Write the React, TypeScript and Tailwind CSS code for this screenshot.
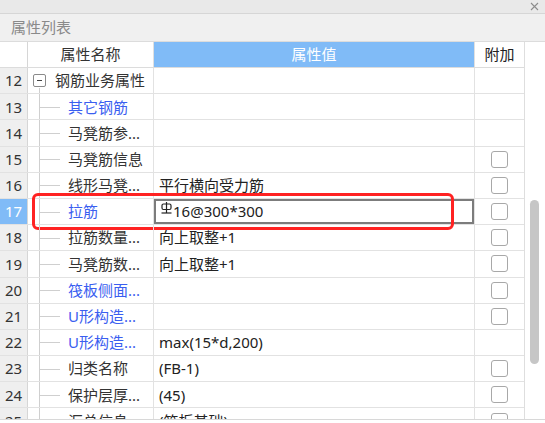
import React from 'react';

type Row = {
  n: number;
  name: string;
  val?: string;
  blue?: boolean;
  root?: boolean;
  cb?: boolean;
  sel?: boolean;
};

const rows: Row[] = [
  { n: 12, name: '钢筋业务属性', root: true },
  { n: 13, name: '其它钢筋', blue: true },
  { n: 14, name: '马凳筋参...' },
  { n: 15, name: '马凳筋信息', cb: true },
  { n: 16, name: '线形马凳...', val: '平行横向受力筋', cb: true },
  { n: 17, name: '拉筋', blue: true, val: '16@300*300', cb: true, sel: true },
  { n: 18, name: '拉筋数量...', val: '向上取整+1', cb: true },
  { n: 19, name: '马凳筋数...', val: '向上取整+1', cb: true },
  { n: 20, name: '筏板侧面...', blue: true, cb: true },
  { n: 21, name: 'U形构造...', blue: true, cb: true },
  { n: 22, name: 'U形构造...', blue: true, val: 'max(15*d,200)' },
  { n: 23, name: '归类名称', val: '(FB-1)', cb: true },
  { n: 24, name: '保护层厚...', val: '(45)', cb: true },
  { n: 25, name: '汇总信息', val: '(筏板基础)', cb: true },
];

// HRB400 rebar grade mark
function GradeMark() {
  return (
    <svg width="11" height="13" viewBox="0 0 11 13" className="mr-[1px] -mt-[6px] shrink-0">
      <rect x="1" y="2" width="9" height="5.5" rx="1.5" fill="none" stroke="#222" strokeWidth="1.2" />
      <line x1="5.5" y1="0" x2="5.5" y2="11" stroke="#222" strokeWidth="1.2" />
      <line x1="0.5" y1="11" x2="10.5" y2="11" stroke="#222" strokeWidth="1.2" />
    </svg>
  );
}

function Checkbox() {
  return <div className="w-[17px] h-[17px] rounded-[3px] border-[1.5px] border-[#a8a8a8] bg-white" />;
}

function NameCell({ row }: { row: Row }) {
  if (row.root) {
    return (
      <div className="relative h-full flex items-center pl-[5px]">
        <div className="w-[13px] h-[13px] border border-[#8a8a8a] rounded-[2px] flex items-center justify-center bg-white">
          <div className="w-[5px] h-px bg-[#444]" />
        </div>
        <span className="ml-[9px] text-[#333]">{row.name}</span>
        <div className="absolute left-[11px] top-[20px] bottom-0 w-px bg-[#cfcfcf]" />
      </div>
    );
  }
  return (
    <div className="relative h-full flex items-center pl-[40px]">
      <div className="absolute left-[11px] top-0 bottom-0 w-px bg-[#cfcfcf]" />
      <div className="absolute left-[12px] top-1/2 w-[20px] h-px bg-[#cfcfcf]" />
      <span className={row.blue ? 'text-[#3a5ef0]' : 'text-[#333]'}>{row.name}</span>
    </div>
  );
}

export default function App() {
  return (
    <div
      className="w-[545px] h-[423px] overflow-hidden bg-white flex flex-col text-[15px]"
      style={{ fontFamily: '"Noto Sans", "Noto Sans CJK SC", sans-serif' }}
    >
      <div className="h-[14px] shrink-0 bg-[#e9e9e9] border-b border-[#d6d6d6] flex justify-end items-center pr-[6px]">
        <svg width="9" height="9" viewBox="0 0 9 9">
          <path d="M1 1L8 8M8 1L1 8" stroke="#8c8c8c" strokeWidth="1.1" />
        </svg>
      </div>
      <div className="h-[28px] shrink-0 bg-[#f0f0f0] border-b border-[#dcdcdc] flex items-center pl-[11px] text-[#8a8a8a]">
        属性列表
      </div>
      <div className="h-[378px] shrink-0 flex border-b border-[#d8d8d8] overflow-hidden">
        <div className="w-[525px] border-r border-[#dedede]">
          <div className="grid grid-cols-[28px_126px_320px_50px] h-[26px] border-b border-[#dcdcdc]">
            <div className="bg-white border-r border-[#d6d6d6]" />
            <div className="flex items-center justify-center text-[#333] border-r border-[#e0e0e0]">属性名称</div>
            <div className="flex items-center justify-center text-white bg-[#80bbf7]">属性值</div>
            <div className="flex items-center justify-center text-[#222] border-l border-[#e0e0e0]">附加</div>
          </div>
          {rows.map((r) => (
            <div key={r.n} className="relative grid grid-cols-[28px_126px_320px_50px] h-[26.2px] border-b border-[#e2e2e2]">
              <div
                className={
                  'flex items-center justify-center border-r border-[#d6d6d6] ' +
                  (r.sel ? 'bg-[#80bbf7] text-white' : 'bg-[#efefef] text-[#333]')
                }
              >
                {r.n}
              </div>
              <div className="border-r border-[#e2e2e2]">
                <NameCell row={r} />
              </div>
              <div
                className={
                  'flex items-center whitespace-nowrap overflow-hidden text-[#222] ' +
                  (r.sel ? 'border-2 border-[#7c7c7c] pl-[5px] bg-white' : 'pl-[5px]')
                }
              >
                {r.sel && <GradeMark />}
                {r.val}
              </div>
              <div className="flex items-center justify-center border-l border-[#e2e2e2]">
                {r.cb && <Checkbox />}
              </div>
              {r.sel && (
                <div className="absolute left-[32px] top-[-6px] w-[422px] h-[37px] border-[3px] border-[#ff2222] rounded-[6px] pointer-events-none" />
              )}
            </div>
          ))}
        </div>
        <div className="w-[20px] bg-white pt-[158px] pl-[5px]">
          <div className="w-[9px] h-[164px] rounded-full bg-[#c6c6c6]" />
        </div>
      </div>
    </div>
  );
}
